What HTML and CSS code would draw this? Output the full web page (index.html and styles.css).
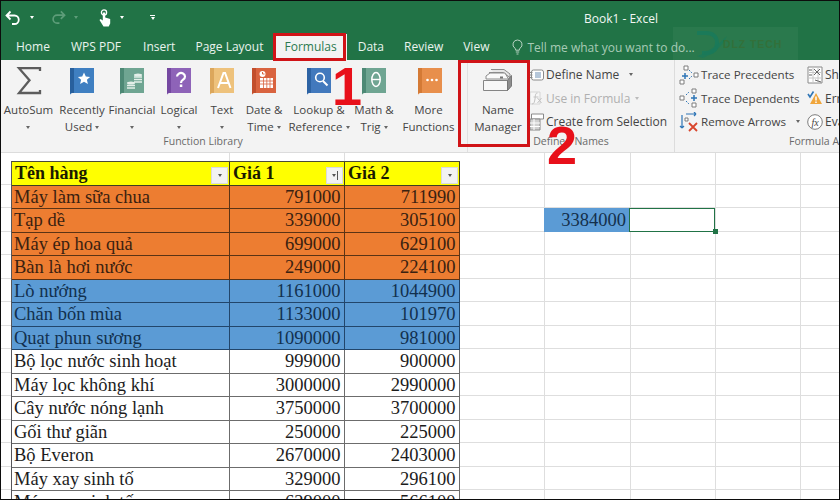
FILE: index.html
```html
<!DOCTYPE html>
<html lang="vi">
<head>
<meta charset="utf-8">
<title>Book1 - Excel</title>
<link rel="stylesheet" href="styles.css">
</head>
<body>
<div class="app">
  <header class="titlebar">
    <div class="qat">
      <svg class="q-undo" width="16" height="16" viewBox="0 0 16 16"><path d="M5.500 1.500 1.500 5.500l4 4M2 5.500h7.500a4.200 4.200 0 0 1 0 8.500H7" fill="none" stroke="#fff" stroke-width="1.800"/></svg>
      <i class="qcaret q1"></i>
      <svg class="q-redo" width="15" height="15" viewBox="0 0 16 16"><path d="M10.500 1.500l4 4-4 4M14 5.500H6.500a4.200 4.200 0 0 0 0 8.500H9" fill="none" stroke="#5d9d79" stroke-width="1.800"/></svg>
      <i class="qcaret q2 dim"></i>
      <svg class="q-touch" width="18" height="18" viewBox="0 0 18 18"><circle cx="7" cy="3.500" r="2.600" fill="none" stroke="#fff" stroke-width="1.300"/><path d="M5.800 3.500h2.400v5l5 1.500v4.500l-1.500 3H6.500L2.500 11l1-1 2.300 1.500z" fill="#fff"/></svg>
      <i class="qcaret q3"></i>
      <span class="q-custom"><b></b><i class="qcaret"></i></span>
    </div>
    <div class="doc-title">Book1 - Excel</div>
  </header>

  <nav class="tabs">
    <span class="tab">Home</span>
    <span class="tab">WPS PDF</span>
    <span class="tab t-ins">Insert</span>
    <span class="tab">Page Layout</span>
    <span class="tab active">Formulas</span>
    <span class="tab">Data</span>
    <span class="tab t-rev">Review</span>
    <span class="tab t-view">View</span>
    <span class="tell">
      <svg width="11" height="16" viewBox="0 0 11 16"><path d="M5.500 1a4.500 4.500 0 0 0-2.600 8.200c.6.500.8 1 .8 2h3.600c0-1 .2-1.500.8-2A4.500 4.500 0 0 0 5.500 1zM3.800 13h3.400M4.500 15h2" fill="none" stroke="#b7d3c2" stroke-width="1"/></svg>
      <span>Tell me what you want to do...</span>
    </span>
  </nav>

  <section class="ribbon">
    <div class="group g-lib">
      <div class="group-body">
        <div class="rbtn w-auto">
          <svg class="ico" width="26" height="30" viewBox="0 0 26 30"><path d="M24 5V2.200H3l10.500 12L3 27h21v-3" fill="none" stroke="#5c5c5c" stroke-width="2.300"/></svg>
          <span class="lbl">AutoSum<br><i class="caret"></i></span>
        </div>
        <div class="rbtn w-rec">
          <svg class="ico" width="26" height="30" viewBox="0 0 26 30"><path d="M1 2h24v25H3.500A2.500 2.500 0 0 0 1 29.500z" fill="#3f7fc1"/><path d="M1 2h4v25H3.500A2.500 2.500 0 0 0 1 28z" fill="#28609d"/><path d="M15 6.500l1.800 4 4.300.400-3.200 2.900 1 4.300-3.900-2.300-3.900 2.300 1-4.300-3.200-2.900 4.300-.400z" fill="#fff"/></svg>
          <span class="lbl">Recently<br>Used <i class="caret"></i></span>
        </div>
        <div class="rbtn w-fin">
          <svg class="ico" width="26" height="30" viewBox="0 0 26 30"><path d="M1 2h24v25H3.500A2.500 2.500 0 0 0 1 29.500z" fill="#6fa592"/><path d="M1 2h4v25H3.500A2.500 2.500 0 0 0 1 28z" fill="#4d8975"/><ellipse cx="19" cy="9" rx="4" ry="1.500" fill="#e4efe9"/><path d="M15 11h8M15 13.500h8M15 16h8" stroke="#e4efe9" stroke-width="1.300"/><ellipse cx="12" cy="17" rx="4" ry="1.500" fill="#e4efe9"/><path d="M8 19.500h8M8 22h8" stroke="#e4efe9" stroke-width="1.300"/></svg>
          <span class="lbl">Financial<br><i class="caret"></i></span>
        </div>
        <div class="rbtn w-log">
          <svg class="ico" width="26" height="30" viewBox="0 0 26 30"><path d="M1 2h24v25H3.500A2.500 2.500 0 0 0 1 29.500z" fill="#8e63b8"/><path d="M1 2h4v25H3.500A2.500 2.500 0 0 0 1 28z" fill="#7548a1"/><path d="M11 10.500a4 3.600 0 1 1 6 3.200c-1.500 1-2 1.600-2 3.300" fill="none" stroke="#fff" stroke-width="2.200"/><rect x="13.800" y="18.500" width="2.500" height="2.500" fill="#fff"/></svg>
          <span class="lbl">Logical<br><i class="caret"></i></span>
        </div>
        <div class="rbtn w-txt">
          <svg class="ico" width="26" height="30" viewBox="0 0 26 30"><path d="M1 2h24v25H3.500A2.500 2.500 0 0 0 1 29.500z" fill="#eec27c"/><path d="M1 2h4v25H3.500A2.500 2.500 0 0 0 1 28z" fill="#dca75c"/><path d="M9 22l5.500-15h1.600L21.500 22M11 17h9" fill="none" stroke="#fff" stroke-width="2"/></svg>
          <span class="lbl">Text<br><i class="caret"></i></span>
        </div>
        <div class="rbtn w-dat">
          <svg class="ico" width="26" height="30" viewBox="0 0 26 30"><path d="M1 2h24v25H3.500A2.500 2.500 0 0 0 1 29.500z" fill="#d9633f"/><path d="M1 2h4v25H3.500A2.500 2.500 0 0 0 1 28z" fill="#c24e2c"/><circle cx="11.500" cy="8" r="3" fill="#fff"/><path d="M11.500 6v2h2" stroke="#d9633f" fill="none"/><path d="M9 12h13v10H9z" fill="#fff"/><path d="M9 15h13M9 18h13M12.500 12v10M15.800 12v10M19 12v10" stroke="#d9633f" stroke-width=".8"/></svg>
          <span class="lbl">Date &amp;<br>Time <i class="caret"></i></span>
        </div>
        <div class="rbtn w-lok">
          <svg class="ico" width="26" height="30" viewBox="0 0 26 30"><path d="M1 2h24v25H3.500A2.500 2.500 0 0 0 1 29.500z" fill="#4279bd"/><path d="M1 2h4v25H3.500A2.500 2.500 0 0 0 1 28z" fill="#2d63a4"/><circle cx="14" cy="11.500" r="4.300" fill="none" stroke="#fff" stroke-width="1.600"/><path d="M17 15l4.500 4.500" stroke="#fff" stroke-width="2"/></svg>
          <span class="lbl">Lookup &amp;<br>Reference <i class="caret"></i></span>
        </div>
        <div class="rbtn w-mat">
          <svg class="ico" width="26" height="30" viewBox="0 0 26 30"><path d="M1 2h24v25H3.500A2.500 2.500 0 0 0 1 29.500z" fill="#6fa592"/><path d="M1 2h4v25H3.500A2.500 2.500 0 0 0 1 28z" fill="#4d8975"/><ellipse cx="15" cy="13.500" rx="4.200" ry="7" fill="none" stroke="#fff" stroke-width="1.500"/><path d="M11 13.500h8" stroke="#fff" stroke-width="1.400"/></svg>
          <span class="lbl">Math &amp;<br>Trig <i class="caret"></i></span>
        </div>
        <div class="rbtn w-mor">
          <svg class="ico" width="26" height="30" viewBox="0 0 26 30"><path d="M1 2h24v25H3.500A2.500 2.500 0 0 0 1 29.500z" fill="#e88f4c"/><path d="M1 2h4v25H3.500A2.500 2.500 0 0 0 1 28z" fill="#d47a35"/><circle cx="10.500" cy="14" r="1.300" fill="#fff"/><circle cx="15" cy="14" r="1.300" fill="#fff"/><circle cx="19.500" cy="14" r="1.300" fill="#fff"/></svg>
          <span class="lbl lbl-mor">More<br>Functions</span>
        </div>
      </div>
      <div class="group-label lib-label">Function Library</div>
    </div>

    <div class="group g-names">
      <div class="group-body">
        <div class="rbtn w-nm">
          <svg class="ico" width="32" height="30" viewBox="0 0 32 30"><path d="M9 3.500h13l6 4.500v12l-2 4" fill="#e6e6e6" stroke="#8c8c8c"/><path d="M7 6.500h14l7 5" fill="#efefef" stroke="#8c8c8c"/><path d="M4 10l4-3h15l3.500 6H4z" fill="#fafafa" stroke="#8c8c8c"/><path d="M1.500 14.500h24v10h-24z" fill="#f7f7f7" stroke="#858585"/><path d="M25.500 14.500l4-5v10.500l-4 4.500z" fill="#8d8d8d" stroke="#777"/><rect x="18" y="10.500" width="3" height="2" fill="#777"/></svg>
          <span class="lbl">Name<br>Manager</span>
        </div>
        <div class="list l-names">
          <div class="li">
            <svg width="15" height="14" viewBox="0 0 15 14"><rect x="2.500" y="2" width="12" height="10" rx="2" fill="#fff" stroke="#8a8a8a"/><path d="M.500 4.500h3M.500 7h3M.500 9.500h3" stroke="#8a8a8a"/><path d="M6 5h6M6 7h6M6 9h6" stroke="#6d8fb5"/></svg>
            <span>Define Name</span><i class="caret sp"></i>
          </div>
          <div class="li off">
            <svg width="15" height="16" viewBox="0 0 15 16"><path d="M1 2h10v12H1z" fill="#f7f7f7" stroke="#d5d5d5"/><path d="M8.500 3C6 3 6.500 6 6 9s-1 5-3 5M4.500 7h5M8.500 8l4 5M12.500 8l-4 5" fill="none" stroke="#c2c2c2"/></svg>
            <span>Use in Formula</span><i class="caret off-c"></i>
          </div>
          <div class="li">
            <svg width="15" height="18" viewBox="0 0 15 18"><path d="M2.500 1h12v5h-12z" fill="#fff" stroke="#8a8a8a"/><path d="M1 6h10v11H1z" fill="#d0d0d0" stroke="#8a8a8a"/><path d="M1 10h10M1 13.500h10M5 6v11" stroke="#fff"/></svg>
            <span>Create from Selection</span>
          </div>
        </div>
      </div>
      <div class="group-label">Defined Names</div>
    </div>

    <div class="group g-audit">
      <div class="group-body">
        <div class="list l-trace">
          <div class="li">
            <svg width="20" height="20" viewBox="0 0 20 20"><path d="M5 1h4v4H5zM1 15h4v4H1z" fill="#fff" stroke="#7d7d7d"/><path d="M15 8h4v4h-4z" fill="#fff" stroke="#7d7d7d"/><path d="M6 8v6M3 11h6" stroke="#2e75b6" stroke-width="1.500"/><path d="M10 5l3 3M10 14l3-3" stroke="#2e75b6" stroke-dasharray="1.500 1"/></svg>
            <span>Trace Precedents</span>
          </div>
          <div class="li">
            <svg width="20" height="20" viewBox="0 0 20 20"><path d="M1 8h4v4H1z" fill="#fff" stroke="#7d7d7d"/><path d="M13 1h4v4h-4zM13 15h4v4h-4z" fill="#fff" stroke="#7d7d7d"/><path d="M15 7v6M12 10h6" stroke="#2e75b6" stroke-width="1.500"/><path d="M7 7l3-3M7 13l3 3" stroke="#2e75b6" stroke-dasharray="1.500 1"/></svg>
            <span>Trace Dependents</span>
          </div>
          <div class="li">
            <svg width="20" height="20" viewBox="0 0 20 20"><path d="M3 3v13M3 16l-2-2M3 16l2-2M7 2h10M17 2l-2-2M17 2l-2 2" fill="none" stroke="#2e75b6" stroke-width="1.200"/><path d="M6 6h3v3H6z" fill="#fff" stroke="#7d7d7d"/><path d="M10 11l8 8M18 11l-8 8" stroke="#d9452c" stroke-width="1.800"/></svg>
            <span>Remove Arrows</span><i class="caret sp"></i>
          </div>
        </div>
        <div class="list l-eval">
          <div class="li">
            <svg width="16" height="18" viewBox="0 0 16 18"><path d="M1 1h14v16H1z" fill="#fff" stroke="#8a8a8a"/><path d="M1 6.500h14M1 12h14M6 1v16M11 1v16" stroke="#c8c8c8"/><path d="M2 4h3M2 9h3M7 3l6 6M13 3l-6 6M8 14l6 2" stroke="#666"/></svg>
            <span>Show Formulas</span>
          </div>
          <div class="li">
            <svg width="16" height="18" viewBox="0 0 16 18"><path d="M1 5l2 3 3.500-5.500" fill="none" stroke="#2e75b6" stroke-width="1.600"/><path d="M9 4l6 11H3z" fill="#f0a63c"/><path d="M9 7.500v4M9 12.500v1.500" stroke="#fff" stroke-width="1.500"/></svg>
            <span>Error Checking</span>
          </div>
          <div class="li">
            <svg width="16" height="18" viewBox="0 0 16 18"><circle cx="8" cy="9" r="7.300" fill="#fff" stroke="#7d7d7d"/><text x="8" y="13" text-anchor="middle" class="fx">fx</text></svg>
            <span>Evaluate Formula</span>
          </div>
        </div>
      </div>
      <div class="group-label audit-label">Formula Auditing</div>
    </div>
  </section>

  <main class="sheet">
    <div class="table">
      <div class="c h"><span>Tên hàng</span><i class="filter"><i class="caret dark"></i></i></div>
      <div class="c h"><span>Giá 1</span><i class="filter"><i class="caret dark"></i><b class="sort"></b></i></div>
      <div class="c h"><span>Giá 2</span><i class="filter"><i class="caret dark"></i></i></div>

      <div class="c o">Máy làm sữa chua</div><div class="c o n">791000</div><div class="c o n">711990</div>
      <div class="c o">Tạp dề</div><div class="c o n">339000</div><div class="c o n">305100</div>
      <div class="c o">Máy ép hoa quả</div><div class="c o n">699000</div><div class="c o n">629100</div>
      <div class="c o">Bàn là hơi nước</div><div class="c o n">249000</div><div class="c o n">224100</div>

      <div class="c b">Lò nướng</div><div class="c b n">1161000</div><div class="c b n">1044900</div>
      <div class="c b">Chăn bốn mùa</div><div class="c b n">1133000</div><div class="c b n">101970</div>
      <div class="c b">Quạt phun sương</div><div class="c b n">1090000</div><div class="c b n">981000</div>

      <div class="c">Bộ lọc nước sinh hoạt</div><div class="c n">999000</div><div class="c n">900000</div>
      <div class="c">Máy lọc không khí</div><div class="c n">3000000</div><div class="c n">2990000</div>
      <div class="c">Cây nước nóng lạnh</div><div class="c n">3750000</div><div class="c n">3700000</div>
      <div class="c">Gối thư giãn</div><div class="c n">250000</div><div class="c n">225000</div>
      <div class="c">Bộ Everon</div><div class="c n">2670000</div><div class="c n">2403000</div>
      <div class="c">Máy xay sinh tố</div><div class="c n">329000</div><div class="c n">296100</div>
      <div class="c">Máy xay sinh tố</div><div class="c n">629000</div><div class="c n">566100</div>
    </div>
    <div class="side">
      <div class="total">3384000</div>
      <div class="selected"><b class="handle"></b></div>
    </div>
  </main>

  <div class="watermark">
    <svg width="34" height="30" viewBox="0 0 34 30"><path d="M3 4h9c7 0 11 4 11 10s-4 10-11 10H8" fill="none" stroke="#1b7a59" stroke-width="4"/><path d="M3 27C13 24 24 16 33 7 28 18 19 25 9 29z" fill="#1b7a59" opacity=".75"/></svg>
    <span>DLZ TECH</span>
  </div>
  <div class="mark mark-tab"></div>
  <div class="mark mark-name"></div>
  <div class="num num-1">1</div>
  <div class="num num-2">2</div>
</div>
</body>
</html>
```

FILE: styles.css
```css
* { box-sizing: border-box; }
html, body { margin: 0; padding: 0; }
body { width: 840px; height: 500px; overflow: hidden; background: #000; }
i { font-style: normal; }

.app {
  position: relative;
  width: 840px;
  height: 500px;
  overflow: hidden;
  display: flex;
  flex-direction: column;
  border: 1px solid #0c0c0c;
  font-family: "Open Sans", "Noto Sans", sans-serif;
  background: #fff;
}

/* title bar */
.titlebar {
  height: 29px;
  flex: none;
  background: #217346;
  display: flex;
  align-items: center;
  position: relative;
}
.qat {
  display: flex;
  align-items: center;
  padding: 4px 0 0 4px;
  width: 583px;
}
.qcaret {
  display: inline-block;
  width: 0;
  height: 0;
  border: 2.500px solid transparent;
  border-top: 3px solid #fff;
  border-bottom: 0;
}
.qcaret.dim { border-top-color: #5d9d79; }
.q1 { margin-left: 9px; }
.q-redo { margin-left: 17px; }
.q2 { margin-left: 8px; }
.q-touch { margin-left: 19px; }
.q3 { margin-left: 5px; }
.q-custom { margin-left: 26px; display: inline-flex; flex-direction: column; align-items: center; gap: 1px; }
.q-custom b { width: 5px; height: 1px; background: #fff; }
.doc-title { color: #f2f7f4; font-size: 12px; padding-top: 5px; }

/* tabs */
.tabs {
  height: 30px;
  flex: none;
  background: #217346;
  display: flex;
  align-items: flex-end;
  padding-left: 5px;
  font-size: 12px;
}
.tab {
  color: #eaf3ee;
  padding: 0 10px;
  margin-right: 1px;
  height: 26px;
  line-height: 25px;
}
.t-ins { margin-left: 1px; margin-right: 0; }
.t-rev { margin-left: -1px; }
.t-view { margin-left: -1px; }
.tab.active {
  background: #f3f3f3;
  color: #2b7a50;
}
.tell {
  display: inline-flex;
  align-items: center;
  gap: 5px;
  color: #a8cbb6;
  height: 26px;
  margin-left: 12px;
}
.tell span { margin-left: -1px; }

/* ribbon */
.ribbon {
  height: 93px;
  flex: none;
  background: #f3f3f3;
  border-bottom: 1px solid #dcdcdc;
  display: flex;
  font-size: 12px;
  color: #444;
}
.group {
  display: flex;
  flex-direction: column;
  flex: none;
}
.group-body { flex: 1; display: flex; min-height: 0; }
.group-label {
  height: 18px;
  font-size: 10.500px;
  line-height: 15px;
  color: #6a6a6a;
  text-align: center;
}
.lib-label { padding-right: 62px; }
.g-lib { width: 466px; }
.g-names { width: 208px; border-left: 1px solid #e0e0e0; border-right: 1px solid #dcdcdc; }
.g-audit { flex: 1; min-width: 0; overflow: hidden; }
.audit-label { text-align: left; padding-left: 114px; white-space: nowrap; }

.rbtn {
  display: flex;
  flex-direction: column;
  align-items: center;
  padding-top: 6px;
  flex: none;
  white-space: nowrap;
}
.ico { flex: none; height: 30px; }
.lbl {
  text-align: center;
  line-height: 16.500px;
  margin-top: 6px;
  font-size: 11.500px;
}
.lbl-mor { margin-right: 3px; }
.w-auto { width: 55px; }
.w-rec { width: 52px; }
.w-fin { width: 48px; }
.w-log { width: 46px; }
.w-txt { width: 40px; }
.w-dat { width: 44px; }
.w-lok { width: 66px; }
.w-mat { width: 44px; }
.w-mor { width: 68px; }
.w-nm { width: 60px; }

.caret {
  display: inline-block;
  width: 0;
  height: 0;
  vertical-align: middle;
  border: 2.500px solid transparent;
  border-top: 3px solid #666;
  border-bottom: 0;
}
.caret.sp { margin-left: 8px; }
.caret.off-c { border-top-color: #bbb; margin-left: 3px; }
.caret.dark { border-top-color: #555; }

.list { display: flex; flex-direction: column; padding-top: 3px; white-space: nowrap; }
.li {
  height: 23.500px;
  display: flex;
  align-items: center;
  gap: 2px;
  font-size: 12px;
}
.li svg { flex: none; }
.li.off { color: #b0b0b0; }
.l-names { padding-left: 1px; }
.l-trace { padding-left: 4px; width: 132px; flex: none; }
.l-trace .li { font-size: 11.600px; }
.fx { font-family: "Liberation Serif", serif; font-style: italic; font-size: 10px; fill: #444; }

/* sheet */
.sheet {
  flex: 1;
  min-height: 0;
  display: flex;
  padding: 8px 0 0 10px;
  overflow: hidden;
  background-color: #fff;
  background-image:
    repeating-linear-gradient(to bottom, transparent 0, transparent 22.500px, #dedede 22.500px, #dedede 23.500px),
    linear-gradient(#dedede, #dedede),
    linear-gradient(#dedede, #dedede),
    repeating-linear-gradient(to right, transparent 0, transparent 84.300px, #dedede 84.300px, #dedede 85.300px);
  background-position: 0 8px, 228px 0, 343px 0, 459px 0;
  background-size: auto, 1px 100%, 1px 100%, auto;
  background-repeat: repeat, no-repeat, no-repeat, no-repeat;
  font-family: "Liberation Serif", serif;
  font-size: 18.500px;
  color: #1c1c1c;
}
.table {
  display: grid;
  grid-template-columns: 218px 115px 115px;
  grid-auto-rows: 23.500px;
  flex: none;
  border-top: 1px solid #4a4a35;
  border-left: 1px solid #55555a;
  height: 345px;
  background: #fff;
}
.c {
  border-right: 1px solid #6c6c6c;
  border-bottom: 1px solid #6c6c6c;
  padding: 0 3.500px 0 2px;
  line-height: 22px;
  white-space: nowrap;
  overflow: hidden;
  background: #fff;
}
.n { text-align: right; }
.h {
  background: #ffff00;
  font-weight: bold;
  font-size: 18px;
  color: #1a1a00;
  display: flex;
  justify-content: space-between;
  padding: 0 1px 0 3px;
  border-color: #3f3f20;
}
.o { background: #ed7d31; color: #3a2110; border-color: #5a3315; }
.b { background: #5b9bd5; color: #12304e; border-color: #22466b; }
.filter {
  flex: none;
  align-self: flex-end;
  margin-bottom: 1px;
  width: 17px;
  height: 17px;
  background: #f2f2f2;
  border: 1px solid #dadada;
  display: flex;
  align-items: center;
  justify-content: center;
  gap: 1px;
}
.sort { width: 1px; height: 9px; background: #555; }
.side {
  flex: none;
  display: grid;
  grid-template-columns: 85px 86px;
  grid-auto-rows: 24px;
  margin: 46.500px 0 0 84px;
  height: 24px;
}
.total {
  background: #5b9bd5;
  color: #14304c;
  text-align: right;
  padding-right: 3px;
  line-height: 24px;
}
.selected {
  position: relative;
  border: 1.500px solid #217346;
  background: #fff;
}
.handle {
  position: absolute;
  right: -3.500px;
  bottom: -3.500px;
  width: 5px;
  height: 5px;
  background: #217346;
}

/* overlays */
.watermark {
  position: absolute;
  left: 672px;
  top: 26px;
  width: 125px;
  height: 33px;
  background: rgba(255, 255, 255, .045);
  display: flex;
  align-items: center;
  padding-left: 21px;
  color: #33703a;
  font-family: "Liberation Sans", sans-serif;
  font-weight: bold;
  font-size: 10.500px;
  letter-spacing: .9px;
  white-space: nowrap;
}
.watermark svg { flex: none; }
.watermark span { margin-left: -5px; }
.mark { position: absolute; border: 3px solid #d01317; }
.mark-tab { left: 272px; top: 32px; width: 73px; height: 28px; }
.mark-name { left: 457px; top: 59px; width: 72px; height: 87px; }
.num {
  position: absolute;
  font-family: "Liberation Sans", sans-serif;
  font-weight: bold;
  font-size: 54px;
  line-height: 54px;
  color: #e8101a;
}
.num-1 { left: 331px; top: 58px; }
.num-2 { left: 546px; top: 117px; }
```
